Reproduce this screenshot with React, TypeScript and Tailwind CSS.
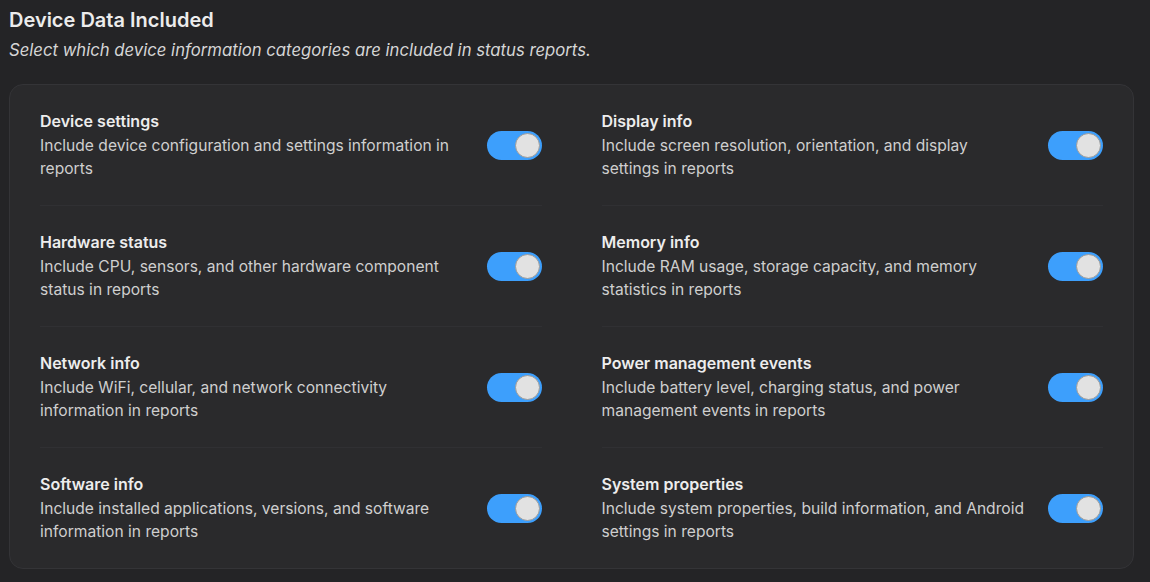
import React, { useState } from 'react';

type Item = { key: string; title: string; desc: string };

const items: Item[] = [
  { key: 'device', title: 'Device settings', desc: 'Include device configuration and settings information in reports' },
  { key: 'display', title: 'Display info', desc: 'Include screen resolution, orientation, and display settings in reports' },
  { key: 'hardware', title: 'Hardware status', desc: 'Include CPU, sensors, and other hardware component status in reports' },
  { key: 'memory', title: 'Memory info', desc: 'Include RAM usage, storage capacity, and memory statistics in reports' },
  { key: 'network', title: 'Network info', desc: 'Include WiFi, cellular, and network connectivity information in reports' },
  { key: 'power', title: 'Power management events', desc: 'Include battery level, charging status, and power management events in reports' },
  { key: 'software', title: 'Software info', desc: 'Include installed applications, versions, and software information in reports' },
  { key: 'system', title: 'System properties', desc: 'Include system properties, build information, and Android settings in reports' },
];

const Toggle = ({ on, onChange }: { on: boolean; onChange: () => void }) => (
  <button
    type="button"
    onClick={onChange}
    className={`flex h-[29px] w-[55px] shrink-0 items-center rounded-full px-[2px] transition-colors ${
      on ? 'justify-end bg-[#3d9ffc]' : 'justify-start bg-[#4a4a4e]'
    }`}
  >
    <span className="h-[25px] w-[25px] rounded-full border border-[#9c9c9c] bg-[#e2e2e2]" />
  </button>
);

const App = () => {
  const [enabled, setEnabled] = useState<Record<string, boolean>>(
    Object.fromEntries(items.map(i => [i.key, true]))
  );

  const toggle = (key: string) => setEnabled(prev => ({ ...prev, [key]: !prev[key] }));

  const rows = [];
  for (let r = 0; r < items.length; r += 2) rows.push(items.slice(r, r + 2));

  return (
    <div className="min-h-[582px] bg-[#242426] px-[9px] pt-[7px] font-['Inter',sans-serif]">
      <h1 className="text-[20px] font-semibold leading-[26px] text-[#ececec]">Device Data Included</h1>
      <p className="mt-[6px] text-[16.7px] italic leading-[22px] text-[#d6d6d6]">
        Select which device information categories are included in status reports.
      </p>

      <div className="mt-[23px] w-[1125px] rounded-[14px] border border-[#343437] bg-[#2a2a2c] px-[30px]">
        {rows.map((row, idx) => (
          <div key={idx} className="grid grid-cols-2 gap-x-[60px]">
            {row.map(item => (
              <div
                key={item.key}
                className={`flex items-center justify-between gap-4 py-[25px] ${
                  idx < rows.length - 1 ? 'border-b border-[#303033]' : ''
                }`}
              >
                <div className="w-[426px]">
                  <div className="text-[16px] font-semibold leading-[22px] text-[#ededed]">{item.title}</div>
                  <div className="mt-[2px] text-[15.6px] leading-[23px] text-[#cfcfcf]">{item.desc}</div>
                </div>
                <Toggle on={enabled[item.key]} onChange={() => toggle(item.key)} />
              </div>
            ))}
          </div>
        ))}
      </div>
    </div>
  );
};

export default App;
